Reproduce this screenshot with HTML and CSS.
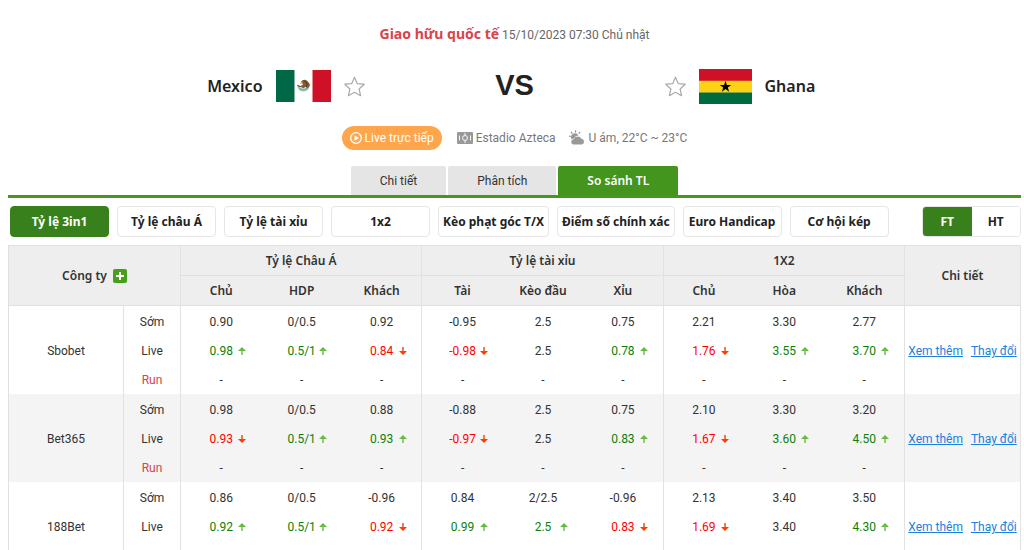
FILE: index.html
```html
<!DOCTYPE html>
<html lang="vi">
<head>
<meta charset="utf-8">
<title>Mexico vs Ghana</title>
<link rel="stylesheet" href="styles.css">
</head>
<body>
<svg class="sprite" aria-hidden="true">
  <symbol id="star" viewBox="0 0 21 21"><path d="M10.500 1.200 13.300 7.700 20.200 8.200 15.100 13 16.600 19.700 10.500 16.300 4.400 19.700 5.900 13 .8 8.200 7.700 7.700Z" fill="#fff" stroke="#aaa" stroke-width="1.200" stroke-linejoin="round"/></symbol>
  <symbol id="up" viewBox="0 0 8 8"><path d="M4 0 8 4H4.700V8H3.300V4H0Z" fill="#6b4"/></symbol>
  <symbol id="down" viewBox="0 0 8 8"><path d="M4 8 0 4H3.300V0H4.700V4H8Z" fill="#ff3c00"/></symbol>
</svg>
<header class="match">
  <p class="league"><strong>Giao hữu quốc tế</strong> <time>15/10/2023 07:30 Chủ nhật</time></p>
  <div class="teams">
    <div class="team home">
      <span class="name">Mexico</span>
      <svg class="flag-mx" viewBox="0 0 55 32" role="img" aria-label="Mexico"><path fill="#fff" d="M0 0h55v32H0z"/><path fill="#006847" d="M0 0h18.500v32H0z"/><path fill="#ce1126" d="M36.500 0H55v32H36.500z"/><path d="M22 15q1 5.500 5.500 5.500T33.500 14" fill="none" stroke="#a8bd8a" stroke-width="1.800"/><path d="M23.500 18.500q4 2 8-.5" fill="none" stroke="#67b7c4" stroke-width="1.500"/><path d="M25 11.500q3-3 6.500-.5l2.500 3.500-2 4-2.500-1.500-2.500 1.500-2.500-2.500 2.500-1.500Z" fill="#8b5a34"/><path d="M27.500 10.500 31 13l-.5 4M21.500 15.500l4 1.500" fill="none" stroke="#4d3520"/><path d="M24 13.500l2.500-1" stroke="#d0a63c"/></svg>
      <button class="fav" aria-label="Mexico"><svg><use href="#star"/></svg></button>
    </div>
    <div class="vs">VS</div>
    <div class="team">
      <button class="fav" aria-label="Ghana"><svg><use href="#star"/></svg></button>
      <svg class="flag-gh" viewBox="0 0 53 35" role="img" aria-label="Ghana"><path fill="#ce1126" d="M0 0h53v12H0z"/><path fill="#fcd116" d="M0 11.700h53v12H0z"/><path fill="#006b3f" d="M0 23.500h53V35H0z"/><path d="M26.500 11.800l1.400 4.100h4.400l-3.500 2.600 1.300 4.200-3.600-2.600-3.600 2.600 1.300-4.200-3.500-2.600h4.400z"/></svg>
      <span class="name">Ghana</span>
    </div>
  </div>
  <div class="meta">
    <a class="live" href="#live"><svg width="12" height="12" viewBox="0 0 12 12"><circle cx="6" cy="6" r="5.300" fill="none" stroke="#fff" stroke-width="1.300"/><path d="M4.500 3.300 9 6 4.500 8.700Z" fill="#fff"/></svg>Live trực tiếp</a>
    <span class="info venue"><svg width="16" height="12" viewBox="0 0 16 12"><rect width="16" height="12" rx="1" fill="#999"/><g fill="none" stroke="#fff" stroke-width=".9"><path d="M8 1v2.500M8 8.500V11M2.500 3.500v5M13.500 3.500v5"/><circle cx="8" cy="6" r="2.500"/></g></svg>Estadio Azteca</span>
    <span class="info weather"><svg width="17" height="16" viewBox="0 0 17 16"><path d="M1 6l1.700.7M3 2l1.400 1.700M7.500.3v2.200M12 2l-1.300 1.700" stroke="#999" stroke-width="1.300"/><path d="M3 8a4 4 0 0 1 7.500-2.500Q7.500 5.300 6 8.500 4.500 8.500 3.500 9.500Z" fill="#999"/><path d="M5.200 14.500a2.700 2.700 0 0 1 .5-5.300 4.200 4.200 0 0 1 7.700-.4 2.900 2.900 0 0 1 .4 5.700Z" fill="#999"/></svg>U ám, 22°C ~ 23°C</span>
  </div>
</header>
<nav class="tabs">
  <a href="#detail">Chi tiết</a>
  <a href="#analysis">Phân tích</a>
  <a class="on" href="#odds">So sánh TL</a>
</nav>
<main>
  <div class="filters">
    <button class="chip on">Tỷ lệ 3in1</button>
    <button class="chip">Tỷ lệ châu Á</button>
    <button class="chip">Tỷ lệ tài xỉu</button>
    <button class="chip">1x2</button>
    <button class="chip">Kèo phạt góc T/X</button>
    <button class="chip">Điểm số chính xác</button>
    <button class="chip">Euro Handicap</button>
    <button class="chip">Cơ hội kép</button>
    <div class="half"><button class="on">FT</button><button>HT</button></div>
  </div>
  <table class="odds">
    <colgroup><col class="c-company"><col class="c-stage"><col span="9"><col class="c-detail"></colgroup>
    <thead>
      <tr><th class="edge company" colspan="2" rowspan="2"><span>Công ty <button class="add" aria-label="Công ty"><svg width="14" height="14" viewBox="0 0 14 14"><rect width="14" height="14" rx="2" fill="#47a01c"/><path d="M7 3v8M3 7h8" stroke="#fff" stroke-width="2"/></svg></button></span></th><th class="edge group" colspan="3">Tỷ lệ Châu Á</th><th class="edge group" colspan="3">Tỷ lệ tài xỉu</th><th class="edge group" colspan="3">1X2</th><th class="edge detail" rowspan="2">Chi tiết</th></tr>
      <tr><th>Chủ</th><th>HDP</th><th class="edge">Khách</th><th>Tài</th><th>Kèo đầu</th><th class="edge">Xỉu</th><th>Chủ</th><th>Hòa</th><th class="edge">Khách</th></tr>
    </thead>
  </table>
</main>
<script src="odds.js"></script>
</body>
</html>
```

FILE: odds.js
```js
// Each live value may start with "^" (rising) or "v" (falling).
// The optional fourth entry is the in-play row.
const idle = Array(9).fill("-");
const books = [
  ["Sbobet",
    ["0.90", "0/0.5", "0.92", "-0.95", "2.5", "0.75", "2.21", "3.30", "2.77"],
    ["^0.98", "^0.5/1", "v0.84", "v-0.98", "2.5", "^0.78", "v1.76", "^3.55", "^3.70"],
    idle],
  ["Bet365",
    ["0.98", "0/0.5", "0.88", "-0.88", "2.5", "0.75", "2.10", "3.30", "3.20"],
    ["v0.93", "^0.5/1", "^0.93", "v-0.97", "2.5", "^0.83", "v1.67", "^3.60", "^4.50"],
    idle],
  ["188Bet",
    ["0.86", "0/0.5", "-0.96", "0.84", "2/2.5", "-0.96", "2.13", "3.40", "3.50"],
    ["^0.92", "^0.5/1", "v0.92", "^0.99", "^2.5", "v0.83", "v1.69", "3.40", "^4.30"]]
];

function cell(value, index) {
  const edge = index % 3 === 2 ? ' class="edge"' : "";
  const trend = { "^": "up", "v": "down" }[value[0]];
  if (!trend) return `<td${edge}>${value}</td>`;
  return `<td${edge}><span class="move ${trend}"><span>${value.slice(1)}</span><svg><use href="#${trend}"/></svg></span></td>`;
}

const table = document.querySelector(".odds");
for (const [name, early, live, run] of books) {
  const body = document.createElement("tbody");
  body.innerHTML =
    `<tr><td class="edge" rowspan="3">${name}</td><td class="edge">Sớm</td>${early.map(cell).join("")}` +
    `<td class="edge links" rowspan="3"><a href="#more">Xem thêm</a><a href="#changes">Thay đổi</a></td></tr>` +
    `<tr><td class="edge">Live</td>${live.map(cell).join("")}</tr>` +
    `<tr><td class="edge run">${run ? "Run" : ""}</td>${(run || Array(9).fill("")).map(cell).join("")}</tr>`;
  table.append(body);
}
```

FILE: styles.css
```css
* { box-sizing: border-box; }
body {
  margin: 0 3px 0 8px;
  background: #fff;
  color: #333;
  font: 12px/16px Roboto, "Noto Sans", sans-serif;
}
button { font: inherit; color: inherit; cursor: pointer; }
a { color: inherit; text-decoration: none; }
.sprite { display: none; }
.league strong, .name, .tabs .on, .filters, .odds th { font-family: "Noto Sans", "Open Sans", sans-serif; }

.match { padding-top: 24px; }
.league { margin: 0; text-align: center; line-height: 20px; color: #666; }
.league strong { font-size: 14px; color: #d9434a; }
.teams { display: grid; grid-template-columns: 1fr 300px 1fr; align-items: center; height: 36px; margin-top: 23px; }
.team { display: flex; align-items: center; gap: 13px; }
.home { justify-content: flex-end; }
.name { font-size: 16px; line-height: 24px; font-weight: 600; color: #222; }
.fav { border: 0; padding: 0; background: none; width: 21px; height: 21px; }
.fav svg { display: block; width: 21px; height: 21px; }
.flag-mx { width: 55px; height: 32px; }
.flag-gh { width: 53px; height: 35px; }
.vs { text-align: center; font: bold 29px/34px "Liberation Sans", Arial, sans-serif; color: #222; padding-bottom: 2px; }
.meta { display: flex; justify-content: center; align-items: center; margin-top: 22px; color: #777; }
.live { display: flex; align-items: center; gap: 3px; height: 24px; padding: 0 8px; margin-right: 15px; border-radius: 12px; background: #ffa64d; color: #fff; }
.info { display: flex; align-items: center; gap: 3px; }
.weather { margin-left: 12px; gap: 4px; }

.tabs { display: flex; justify-content: center; gap: 2px; margin-top: 16px; border-bottom: 3px solid #47961e; }
.tabs a { padding: 1px 29px 0; line-height: 28px; background: #e5e5e5; border-radius: 2px 2px 0 0; }
.tabs .on { background: #43951d; color: #fff; font-weight: 600; }

.filters { display: flex; gap: 8px; padding: 8px 0 8px 2px; font-weight: 700; color: #222; }
.chip { flex: none; min-width: 99px; height: 31px; padding: 0 4px; border: 1px solid #e6e6e6; border-radius: 4px; background: #fff; }
.filters .on { background: #38801b; border-color: #38801b; color: #fff; }
.half { display: flex; width: 99px; margin-left: auto; border: 1px solid #e6e6e6; border-radius: 4px; overflow: hidden; }
.half button { flex: 1; border: 0; padding: 0; background: #fff; }

.odds { width: 100%; table-layout: fixed; border-collapse: separate; border-spacing: 0; border-top: 1px solid #e0e0e0; border-left: 1px solid #e0e0e0; }
.c-company { width: 115px; }
.c-stage { width: 57px; }
.c-detail { width: 116px; }
.odds th, .odds td { padding: 0; text-align: center; }
.odds .edge { border-right: 1px solid #e2e2e2; }
.odds th { height: 30px; background: #eee; border-bottom: 1px solid #e0e0e0; font-weight: 600; }
.odds .company span { display: inline-flex; align-items: center; gap: 6px; }
.add { border: 0; padding: 0; background: none; display: flex; }
.odds td { height: 29px; padding-top: 2px; }
.odds tr:last-child td { height: 30px; }
.odds tbody:nth-of-type(even) td { background: #f4f4f4; }
.odds .run { color: #d9434a; }
.move { display: inline-grid; grid-template-columns: 8px 34px 8px; align-items: center; vertical-align: middle; }
.move span { grid-column: 2; white-space: nowrap; }
.move svg { width: 8px; height: 8px; }
.up { color: #0a800a; }
.down { color: #f00; }
.links a { color: #1a7fe0; text-decoration: underline; }
.links a + a { margin-left: 8px; }
```
